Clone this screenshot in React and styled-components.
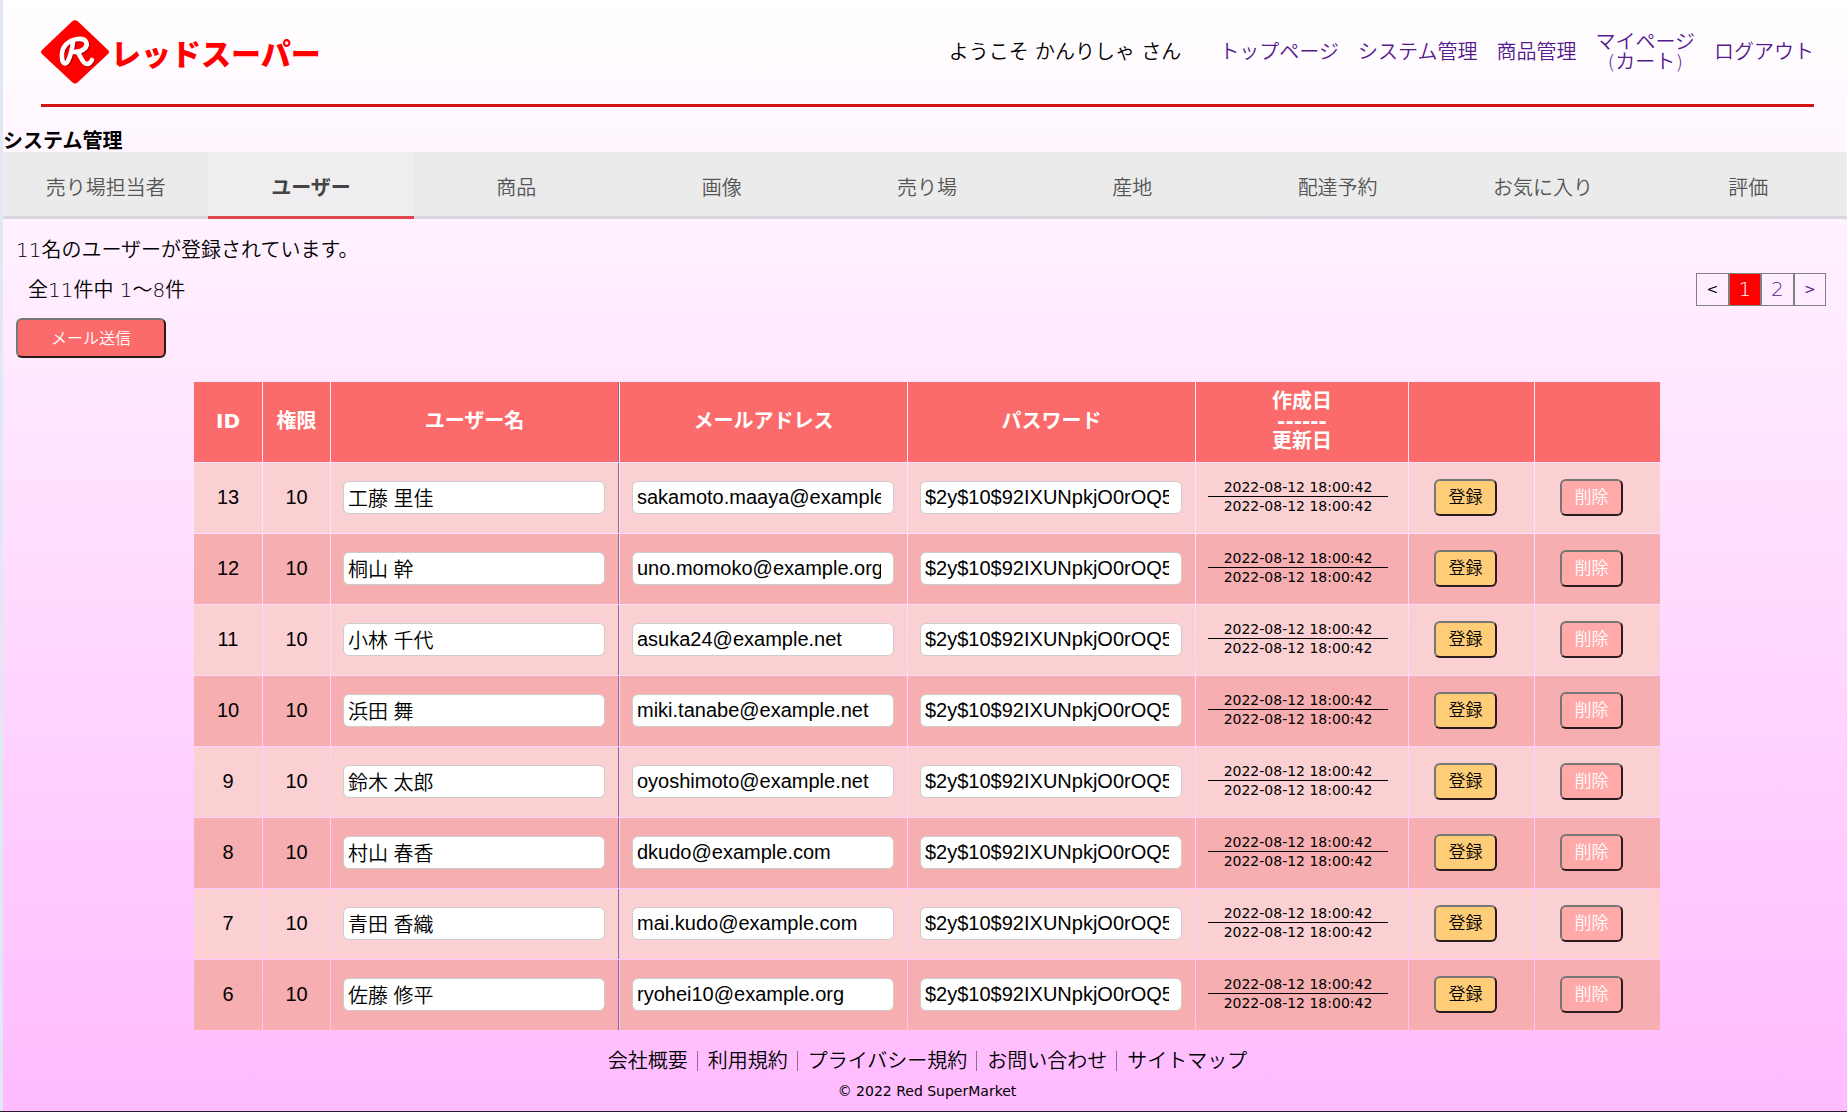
import React from "react";
import styled, { createGlobalStyle, css } from "styled-components";

const GlobalStyle = createGlobalStyle`
  * { box-sizing: border-box; }
  html { overflow-x: hidden; }
  body {
    margin: 0;
    color: #000;
    font: 350 20px/20px "DejaVu Sans", "Noto Sans CJK JP", sans-serif;
  }
  a { color: inherit; text-decoration: none; }
`;

const Page = styled.div`
  width: calc(100% + 4px);
  min-height: 100vh;
  border-bottom: 2px solid #261c28;
  background: #e0e9f3;
  padding-left: 3px;
  display: flex;
`;

const Main = styled.div`
  flex: 1;
  min-width: 0;
  background: linear-gradient(#fff, #fbf);
`;

const Header = styled.header`
  display: flex;
  align-items: center;
  justify-content: space-between;
  height: 107px;
  margin: 0 37px 0 38px;
  border-bottom: 3px solid #d31216;
`;

const Logo = styled.a`
  display: flex;
  align-items: center;
  gap: 2px;
  color: #f00;
  font: 900 30px/40px "Noto Sans CJK JP", sans-serif;
`;

const Nav = styled.nav`
  display: flex;
  align-items: center;
  gap: 19px;
  color: #551a8b;
  text-align: center;
`;

const Welcome = styled.span`
  margin-right: 19px;
  color: #000;
`;

const Title = styled.h1`
  margin: 0;
  padding: 24px 0 1px;
  font-size: 20px;
  font-weight: 700;
  line-height: 20px;
`;

const Tabs = styled.nav`
  display: flex;
`;

const Tab = styled.a`
  flex: 1 1 0;
  height: 67px;
  border-bottom: 3px solid ${(p) => (p.$active ? "#e0474c" : "#dad6dc")};
  background: ${(p) => (p.$active ? "#efedf0" : "#ebebeb")};
  color: ${(p) => (p.$active ? "#444" : "#555")};
  font-weight: ${(p) => (p.$active ? 700 : 350)};
  line-height: 72px;
  text-align: center;
`;

const Summary = styled.section`
  padding: 21px 25px 0 13px;
`;

const Text = styled.p`
  margin: 0;
`;

const PagerRow = styled.div`
  display: flex;
  align-items: center;
  justify-content: space-between;
  margin: 13px 0 12px;
  padding-left: 12px;
`;

const Pager = styled.nav`
  display: flex;
  width: 130px;
`;

const PageLink = styled.a`
  flex: 1 1 0;
  height: 33px;
  border: 1px solid #808080;
  background: ${(p) => (p.$current ? "#f00" : "transparent")};
  color: ${(p) => (p.$current ? "#fff" : p.$disabled ? "#000" : "#551a8b")};
  font-size: ${(p) => (p.$arrow ? "14px" : "20px")};
  font-weight: ${(p) => (p.$arrow ? 400 : 350)};
  line-height: 30px;
  text-align: center;
`;

const tones = {
  send: css`background: #fc6b6b; color: #fff;`,
  save: css`background: #ffcc77; color: #000;`,
  remove: css`background: #ffa9a9; color: #fff;`,
};

const Button = styled.button`
  display: block;
  width: ${(p) => (p.$wide ? "150px" : "63px")};
  height: ${(p) => (p.$wide ? "40px" : "37px")};
  padding: 0 0 2px;
  border: 2px solid;
  border-color: #767676 #2b1b1f #2b1b1f #767676;
  border-radius: 6px;
  font: 350 ${(p) => (p.$wide ? "16px" : "17px")} / 20px "Noto Sans CJK JP", sans-serif;
  ${(p) => tones[p.$tone]}
`;

const Table = styled.table`
  width: 1468px;
  max-width: 100%;
  margin: 23px auto 0;
  border-spacing: 1px;
  table-layout: fixed;
`;

const HeadCell = styled.th`
  height: 80px;
  padding: 0 0 2px;
  background: #fc6b6b;
  border-right: ${(p) => (p.$ruled ? "1px solid #8a6d8c" : "0")};
  color: #fff;
  font-weight: 700;
`;

const Row = styled.tr`
  background: #fbd0d2;
  &:nth-child(even) { background: #f6aeb0; }
`;

const Cell = styled.td`
  height: 70px;
  padding: 0 0 2px;
  text-align: center;
  font-family: "Liberation Sans", "Noto Sans CJK JP", sans-serif;
`;

const FieldCell = styled(Cell)`
  padding: 0 13px 2px 12px;
  border-right: ${(p) => (p.$ruled ? "1px solid #8a6d8c" : "0")};
`;

const ButtonCell = styled(Cell)`
  padding-left: 25px;
`;

const Field = styled.input`
  display: block;
  width: 100%;
  height: 33px;
  padding: 0 12px 0 4px;
  border: 1px solid #ccc;
  border-radius: 6px;
  background: #fff;
  color: #000;
  font: 350 20px "Liberation Sans", "Noto Sans CJK JP", sans-serif;
`;

const DateCell = styled(Cell)`
  padding: 0 20px 4px 12px;
  font: 14px/18px "DejaVu Sans", sans-serif;
`;

const Created = styled.div`
  border-bottom: 1px solid #000;
`;

const Footer = styled.footer`
  padding: 20px 0 10px;
  text-align: center;
`;

const FooterLinks = styled.nav`
  display: flex;
  justify-content: center;
  a { padding: 0 9px 0 10px; }
  a + a { border-left: 1px solid #8d6f96; }
`;

const Copyright = styled.small`
  display: block;
  margin-top: 10px;
  font-size: 14px;
  font-weight: 400;
  line-height: 20px;
`;

const tabs = ["売り場担当者", "ユーザー", "商品", "画像", "売り場", "産地", "配達予約", "お気に入り", "評価"];
const columns = [68, 67, 288, 287, 287, 212, 125, 125];
const hash = "$2y$10$92IXUNpkjO0rOQ5byMi.Ye4oKoEa3Ro9llC";
const stamp = "2022-08-12 18:00:42";
const users = [
  [13, "工藤 里佳", "sakamoto.maaya@example.com"],
  [12, "桐山 幹", "uno.momoko@example.org"],
  [11, "小林 千代", "asuka24@example.net"],
  [10, "浜田 舞", "miki.tanabe@example.net"],
  [9, "鈴木 太郎", "oyoshimoto@example.net"],
  [8, "村山 春香", "dkudo@example.com"],
  [7, "青田 香織", "mai.kudo@example.com"],
  [6, "佐藤 修平", "ryohei10@example.org"],
];
const footerLinks = ["会社概要", "利用規約", "プライバシー規約", "お問い合わせ", "サイトマップ"];

function Mark() {
  const strokes = (
    <>
      <path d="M32 22C31 30 29 37 27 41C25 45 21 44 21 37C20 27 27 20 37 19C46 18 48 25 43 29C40 32 36 32 33 32" />
      <path d="M36 32C40 35 41 44 46 44C49 44 50 42 51 40" />
    </>
  );
  return (
    <svg width="68" height="64" viewBox="0 0 68 64" aria-hidden="true">
      <path d="M31 1.5Q34-1 37 1.5L67 30Q69 32 67 34L37 62Q34 65 31 62L1 34Q-1 32 1 30Z" fill="#f00" />
      <g fill="none" strokeLinecap="round" strokeLinejoin="round" strokeWidth="4.6">
        <g stroke="#a00" transform="translate(1 1)">{strokes}</g>
        <g stroke="#fff">{strokes}</g>
      </g>
    </svg>
  );
}

export default function App() {
  return (
    <>
      <GlobalStyle />
      <Page>
        <Main>
          <Header>
            <Logo href="#"><Mark />レッドスーパー</Logo>
            <Nav>
              <Welcome>ようこそ かんりしゃ さん</Welcome>
              <a href="#">トップページ</a>
              <a href="#">システム管理</a>
              <a href="#">商品管理</a>
              <a href="#">マイページ<br />(カート)</a>
              <a href="#">ログアウト</a>
            </Nav>
          </Header>
          <Title>システム管理</Title>
          <Tabs>
            {tabs.map((t, i) => <Tab key={t} href="#" $active={i === 1}>{t}</Tab>)}
          </Tabs>
          <Summary>
            <Text>11名のユーザーが登録されています。</Text>
            <PagerRow>
              <Text>全11件中 1～8件</Text>
              <Pager>
                <PageLink $disabled $arrow>&lt;</PageLink>
                <PageLink $current>1</PageLink>
                <PageLink href="#">2</PageLink>
                <PageLink href="#" $arrow>&gt;</PageLink>
              </Pager>
            </PagerRow>
            <Button type="button" $wide $tone="send">メール送信</Button>
          </Summary>
          <Table>
            <colgroup>
              {columns.map((w, i) => <col key={i} style={{ width: w }} />)}
            </colgroup>
            <thead>
              <tr>
                <HeadCell>ID</HeadCell>
                <HeadCell>権限</HeadCell>
                <HeadCell $ruled>ユーザー名</HeadCell>
                <HeadCell>メールアドレス</HeadCell>
                <HeadCell>パスワード</HeadCell>
                <HeadCell>作成日<br />------<br />更新日</HeadCell>
                <HeadCell />
                <HeadCell />
              </tr>
            </thead>
            <tbody>
              {users.map(([id, name, mail]) => (
                <Row key={id}>
                  <Cell>{id}</Cell>
                  <Cell>10</Cell>
                  <FieldCell $ruled><Field aria-label="ユーザー名" defaultValue={name} /></FieldCell>
                  <FieldCell><Field aria-label="メールアドレス" defaultValue={mail} /></FieldCell>
                  <FieldCell><Field aria-label="パスワード" defaultValue={hash} /></FieldCell>
                  <DateCell><Created>{stamp}</Created>{stamp}</DateCell>
                  <ButtonCell><Button type="button" $tone="save">登録</Button></ButtonCell>
                  <ButtonCell><Button type="button" $tone="remove">削除</Button></ButtonCell>
                </Row>
              ))}
            </tbody>
          </Table>
          <Footer>
            <FooterLinks>
              {footerLinks.map((t) => <a key={t} href="#">{t}</a>)}
            </FooterLinks>
            <Copyright>© 2022 Red SuperMarket</Copyright>
          </Footer>
        </Main>
      </Page>
    </>
  );
}
